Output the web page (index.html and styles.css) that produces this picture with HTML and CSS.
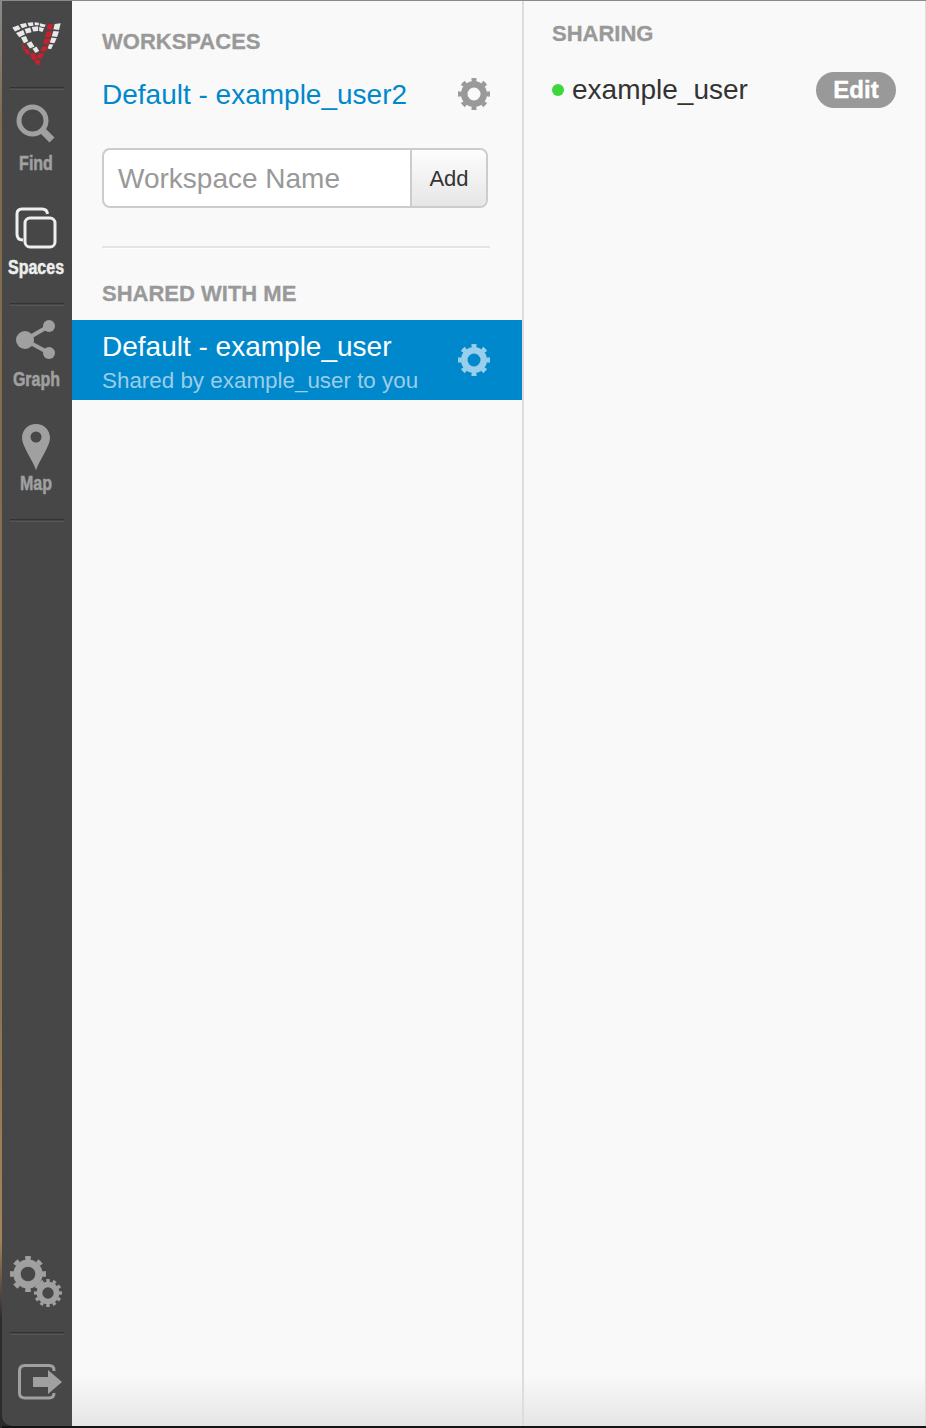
FILE: index.html
```html
<!DOCTYPE html>
<html lang="en">
<head>
    <meta charset="UTF-8">
    <meta name="viewport" content="width=device-width, initial-scale=1.0">
    <title>Workspaces</title>
    <link rel="stylesheet" href="styles.css">
</head>
<body>

    <svg class="defs" width="0" height="0">
        <symbol id="gear" viewBox="0 0 32 32">
            <circle cx="16" cy="16" r="9.75" fill="none" stroke="currentColor" stroke-width="6.5"/>
            <circle cx="16" cy="16" r="14.25" fill="none" stroke="currentColor" stroke-width="3.5" pathLength="80" stroke-dasharray="4.5 5.5" stroke-dashoffset="2.25"/>
        </symbol>
        <symbol id="gear-small" viewBox="0 0 32 32">
            <circle cx="16" cy="16" r="9.75" fill="none" stroke="currentColor" stroke-width="6.5"/>
            <circle cx="16" cy="16" r="14.25" fill="none" stroke="currentColor" stroke-width="3.5" pathLength="80" stroke-dasharray="3.500 3.170" stroke-dashoffset="1.75"/>
        </symbol>
    </svg>

    <div class="app">

        <!-- Sidebar -->
        <nav class="sidebar">
            <div class="logo">
                <svg width="51" height="47" viewBox="36 60 152 142">
                    <g fill="#e8e8e8">
                        <polygon points="39,83 57,76 64,87 47,95"/>
                        <polygon points="62,73 80,69 84,80 68,85"/>
                        <polygon points="85,68 101,67 103,77 89,79"/>
                        <polygon points="106,67 119,68 119,76 107,76"/>
                        <polygon points="122,70 140,74 136,82 122,79"/>
                        <polygon points="50,99 72,90 77,104 60,112"/>
                        <polygon points="76,87 93,83 97,97 81,101"/>
                        <polygon points="98,81 117,79 117,93 102,95"/>
                        <polygon points="120,81 135,85 130,96 120,93"/>
                        <polygon points="167,72 185,70 180,90 163,88"/>
                        <polygon points="163,93 180,95 174,111 158,109"/>
                        <polygon points="157,113 173,115 166,130 152,128"/>
                        <polygon points="150,133 163,134 156,148 146,146"/>
                        <polygon points="65,113 80,108 87,124 74,130"/>
                        <polygon points="82,131 96,124 106,140 92,146"/>
                        <polygon points="100,147 112,140 120,154 109,160"/>
                    </g>
                    <g fill="#c8202f">
                        <polygon points="146,73 163,72 158,90 142,88"/>
                        <polygon points="142,95 160,95 154,112 138,111"/>
                        <polygon points="137,116 155,117 148,134 132,132"/>
                        <polygon points="129,139 147,140 138,156 123,153"/>
                        <polygon points="118,160 136,162 126,178 111,174"/>
                        <polygon points="109,178 124,182 120,198 107,190"/>
                        <polygon points="66,127 72,135 80,145 72,149"/>
                        <polygon points="72,148 85,147 94,161 83,165"/>
                        <polygon points="92,163 106,158 112,175 101,182"/>
                    </g>
                </svg>
            </div>
            <div class="sep"></div>

            <a class="nav-item nav-top">
                <svg width="44" height="44" viewBox="14 103 44 44">
                    <circle cx="32.5" cy="120.5" r="13.5" fill="none" stroke="currentColor" stroke-width="5"/>
                    <line x1="42" y1="130" x2="52" y2="140" stroke="currentColor" stroke-width="7"/>
                </svg>
                <span>Find</span>
            </a>
            <a class="nav-item nav-top active">
                <svg width="44" height="44" viewBox="14 207 44 44">
                    <path d="M23 240 Q17 240 17 234 V214 Q17 209 22 209 H42 Q47 209 47.500 214" fill="none" stroke="currentColor" stroke-width="3"/>
                    <rect x="25" y="218" width="30" height="29" rx="5" fill="none" stroke="currentColor" stroke-width="3"/>
                </svg>
                <span>Spaces</span>
            </a>
            <div class="sep sep-after-spaces"></div>

            <a class="nav-item nav-low">
                <svg width="44" height="44" viewBox="14 320 44 44">
                    <path d="M49 326 L25 340 L49 353" fill="none" stroke="currentColor" stroke-width="4"/>
                    <circle cx="49" cy="326" r="6" fill="currentColor"/>
                    <circle cx="49" cy="353" r="6" fill="currentColor"/>
                    <circle cx="25" cy="340" r="9" fill="currentColor"/>
                </svg>
                <span>Graph</span>
            </a>
            <a class="nav-item nav-low">
                <svg class="pin" width="44" height="44" viewBox="14 424 44 44">
                    <path fill-rule="evenodd" fill="currentColor" d="M36 424 C44 424 50 430 50 438 C50 446 40 459 36 470 C32 459 22 446 22 438 C22 430 28 424 36 424 Z M36 431.500 A5.500 5.500 0 1 0 36 442.500 A5.500 5.500 0 1 0 36 431.500 Z"/>
                </svg>
                <span>Map</span>
            </a>
            <div class="sep sep-after-map"></div>

            <div class="sidebar-footer">
                <svg class="gears" width="60" height="60" viewBox="6 1252 60 60">
                    <use href="#gear" x="10" y="1256" width="36" height="36"/>
                    <use href="#gear-small" x="34" y="1279" width="28" height="28"/>
                </svg>
                <div class="sep"></div>
                <div class="exit">
                    <svg width="44" height="40" viewBox="14 1362 44 40">
                        <path d="M54 1371 V1370 Q54 1365.500 49 1365.500 H25 Q19.500 1365.500 19.500 1371 V1393 Q19.500 1398 25 1398 H49 Q54 1398 54 1393" fill="none" stroke="currentColor" stroke-width="3"/>
                        <polygon fill="currentColor" points="33,1377 48,1377 48,1370 62,1382 48,1394 48,1387 33,1387"/>
                    </svg>
                </div>
            </div>
        </nav>

        <!-- Daftar workspace -->
        <section class="panel panel-spaces">
            <div class="inner">
                <h2 class="heading">WORKSPACES</h2>
                <div class="space-row">
                    <a class="space-name">Default - example_user2</a>
                    <svg class="gear-icon" width="32" height="32"><use href="#gear"/></svg>
                </div>
                <div class="add-group">
                    <input type="text" class="add-input" placeholder="Workspace Name">
                    <button class="add-btn">Add</button>
                </div>
                <div class="divider"></div>
                <h2 class="heading heading-shared">SHARED WITH ME</h2>
            </div>
            <div class="shared-row">
                <div class="shared-text">
                    <div class="shared-title">Default - example_user</div>
                    <div class="shared-sub">Shared by example_user to you</div>
                </div>
                <svg class="gear-icon" width="32" height="32"><use href="#gear"/></svg>
            </div>
        </section>

        <!-- Sharing -->
        <section class="panel panel-sharing">
            <h2 class="heading">SHARING</h2>
            <div class="user-row">
                <span class="dot"></span>
                <span class="user-name">example_user</span>
                <button class="edit-btn">Edit</button>
            </div>
        </section>

    </div>

</body>
</html>
```

FILE: styles.css
```css
* {
    box-sizing: border-box;
}
.defs {
    position: absolute;
}
body {
    margin: 0;
    height: 100vh;
    padding-left: 2px;
    font-family: "Liberation Sans", Arial, sans-serif;
    overflow: hidden;
    background: linear-gradient(to bottom, #8a8a8a 0, #7f6a4f 120px, #8c7350 1000px, #a5835a 1240px, #2a2a30 1320px, #2a2a30 100%);
}
.app {
    display: flex;
    height: 100%;
    border-top: 1px solid #8a8a8a;
    border-bottom: 2px solid #141414;
    background: #2a2a2a;
}
.sidebar {
    width: 70px;
    flex: none;
    display: flex;
    flex-direction: column;
    align-items: center;
    padding-right: 2px;
    background: #474747;
    color: #a0a0a0;
    border-bottom-left-radius: 10px;
}
.logo {
    height: 86px;
    width: 100%;
    padding: 19px 0 0 9px;
}
.logo svg {
    display: block;
}
.sep {
    flex: none;
    align-self: flex-start;
    width: 54px;
    height: 3px;
    margin-left: 8px;
    border-top: 1px solid #333;
    border-bottom: 1px solid #555;
}
.sep-after-spaces {
    margin-top: 5px;
}
.sep-after-map {
    margin-top: 5px;
}
.nav-item {
    display: block;
    height: 104px;
    padding-top: 13px;
    text-align: center;
}
.nav-low {
    padding-top: 14px;
}
.nav-item svg {
    display: block;
    margin: 0 auto;
    overflow: visible;
}
.nav-item span {
    display: block;
    margin-top: 5px;
    font-size: 20px;
    font-weight: bold;
    line-height: 20px;
    transform: scaleX(0.8);
    -webkit-text-stroke: 0.5px currentColor;
}
.nav-top span {
    margin-top: 6px;
}
.active {
    color: #eee;
}
.sidebar-footer {
    margin-top: auto;
    width: 100%;
}
.gears {
    display: block;
    margin: 0 0 20px 4px;
}
.exit {
    height: 91px;
    padding-top: 3px;
    display: flex;
    align-items: center;
    justify-content: center;
}
.exit svg {
    overflow: visible;
}
.panel {
    min-height: 100%;
    background: linear-gradient(to bottom, #f9f9f9 0, #f9f9f9 1375px, #e5e5e5 100%);
}
.panel-spaces {
    width: 452px;
    flex: none;
    border-right: 2px solid #ddd;
}
.panel-sharing {
    flex: 1;
    padding: 21px 29px 0 28px;
    border-right: 1px solid #ddd;
}
.inner {
    padding: 29px 32px 0 30px;
}
.heading {
    margin: 0;
    color: #999;
    font-size: 22px;
    font-weight: bold;
    line-height: 24px;
    -webkit-text-stroke: 0.3px #999;
}
.heading-shared {
    margin-top: 33px;
}
.space-row {
    display: flex;
    justify-content: space-between;
    align-items: center;
    height: 40px;
    margin-top: 20px;
}
.space-name {
    padding-top: 2px;
    color: #0088cc;
    font-size: 28px;
}
.gear-icon {
    color: #999;
    flex: none;
}
.add-group {
    display: flex;
    width: 386px;
    height: 60px;
    margin-top: 34px;
    border: 2px solid #ccc;
    border-radius: 8px;
    overflow: hidden;
    background: #fff;
}
.add-input {
    flex: 1;
    min-width: 0;
    padding: 2px 14px 0;
    border: 0;
    outline: 0;
    font-family: inherit;
    font-size: 28px;
    background: transparent;
}
.add-input::placeholder {
    color: #999;
    opacity: 1;
}
.add-btn {
    width: 76px;
    padding: 2px 0 0;
    border: 0;
    border-left: 2px solid #ccc;
    font-family: inherit;
    font-size: 22px;
    color: #333;
    background: linear-gradient(to bottom, #fdfdfd, #e6e6e6);
}
.divider {
    height: 3px;
    margin-top: 38px;
    background: #e5e5e5;
    border-bottom: 1px solid #fff;
}
.shared-row {
    display: flex;
    justify-content: space-between;
    align-items: center;
    height: 80px;
    margin-top: 14px;
    padding: 0 32px 0 30px;
    background: #0088cc;
}
.shared-row .gear-icon {
    color: #99cfeb;
}
.shared-text {
    padding-top: 10px;
}
.shared-title {
    color: #fff;
    font-size: 28px;
    line-height: 32px;
}
.shared-sub {
    color: #9ccde8;
    font-size: 22.4px;
    line-height: 36px;
}
.user-row {
    display: flex;
    align-items: center;
    height: 36px;
    margin-top: 26px;
}
.dot {
    width: 12px;
    height: 12px;
    margin-right: 8px;
    border-radius: 50%;
    background: #3dd63d;
}
.user-name {
    color: #333;
    font-size: 28px;
}
.edit-btn {
    width: 80px;
    height: 36px;
    margin-left: auto;
    padding: 0;
    border: 0;
    border-radius: 18px;
    color: #fff;
    font-family: inherit;
    font-size: 24px;
    font-weight: bold;
    background: #999;
    -webkit-text-stroke: 0.4px #fff;
}
```
